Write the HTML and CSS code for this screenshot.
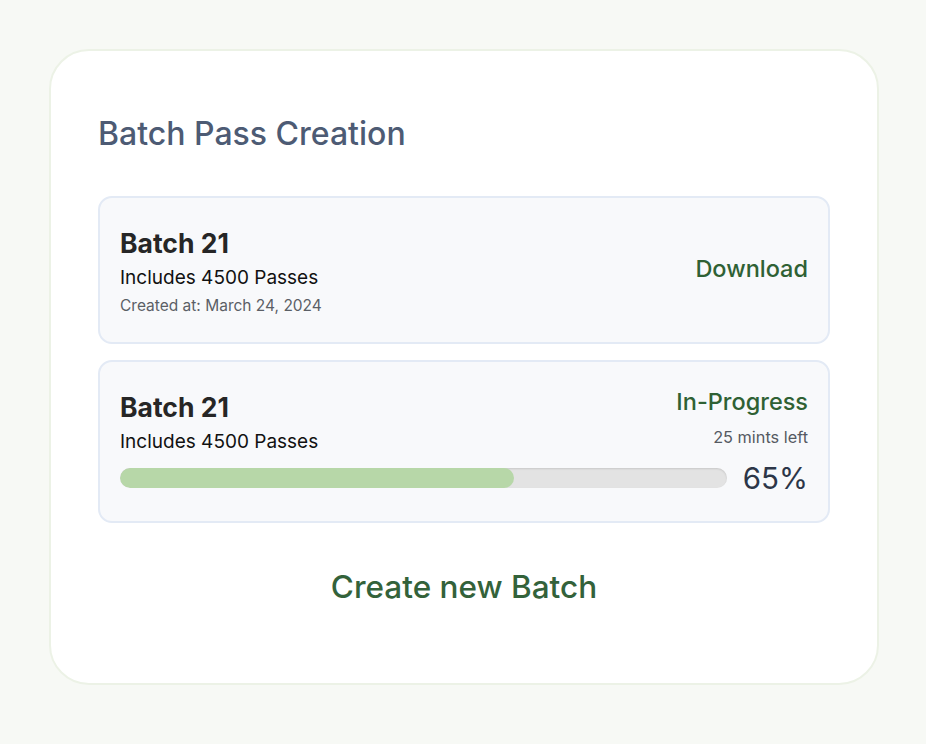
FILE: index.html
```html
<!DOCTYPE html>
<html lang="en">
<head>
<meta charset="utf-8">
<title>Batch Pass Creation</title>
<link rel="stylesheet" href="styles.css">
</head>
<body>
<div class="card">
  <h1 class="title">Batch Pass Creation</h1>
  <div class="batch">
    <div class="batch-info">
      <div class="batch-name">Batch 21</div>
      <div class="batch-count">Includes 4500 Passes</div>
      <div class="batch-date">Created at: March 24, 2024</div>
    </div>
    <a class="action">Download</a>
  </div>
  <div class="batch batch-progress">
    <div class="row-top">
      <div class="batch-info">
        <div class="batch-name">Batch 21</div>
        <div class="batch-count">Includes 4500 Passes</div>
      </div>
      <div class="status">
        <div class="status-label">In-Progress</div>
        <div class="status-time">25 mints left</div>
      </div>
    </div>
    <div class="row-bar">
      <div class="bar"><div class="fill" style="width:65%"></div></div>
      <div class="percent">65%</div>
    </div>
  </div>
  <div class="create">Create new Batch</div>
</div>
</body>
</html>
```
FILE: styles.css
```css
* { box-sizing: border-box; }
html, body { margin: 0; padding: 0; }
body {
  background: #f7f9f5;
  font-family: Inter, "Noto Sans", "Liberation Sans", sans-serif;
  padding: 49px 0 0 49px;
}
.card {
  width: 830px;
  height: 636px;
  background: #ffffff;
  border: 2px solid #ecf2e6;
  border-radius: 40px;
  padding: 63px 47px 0 47px;
}
.title {
  margin: 0 0 42px 0;
  font-size: 32px;
  font-weight: 500;
  line-height: 40px;
  color: #4d5b74;
}
.batch {
  display: flex;
  justify-content: space-between;
  align-items: flex-start;
  background: #f8f9fb;
  border: 2px solid #e3eaf5;
  border-radius: 14px;
  padding: 29px 20px 0 20px;
  margin-bottom: 16px;
  height: 148px;
}
.batch-name {
  font-size: 26.5px;
  font-weight: 700;
  line-height: 32px;
  color: #262626;
}
.batch-count {
  font-size: 19px;
  line-height: 24px;
  margin-top: 7px;
  color: #111;
}
.batch-date {
  font-size: 15.5px;
  line-height: 20px;
  margin-top: 6px;
  color: #5b5f66;
}
.action {
  font-size: 23.5px;
  font-weight: 500;
  line-height: 30px;
  color: #2f6134;
  margin-top: 27px;
}
.batch-progress {
  display: block;
  height: 163px;
  padding: 25px 20px 0 20px;
  margin-bottom: 0;
}
.row-top {
  display: flex;
  justify-content: space-between;
  align-items: flex-start;
}
.batch-progress .batch-name { margin-top: 4px; }
.status { text-align: right; }
.status-label {
  font-size: 23.5px;
  font-weight: 500;
  line-height: 30px;
  color: #2f6134;
}
.status-time {
  font-size: 16.3px;
  line-height: 20px;
  margin-top: 10px;
  color: #555a62;
}
.row-bar {
  display: flex;
  align-items: center;
  gap: 16px;
  margin-top: 6px;
}
.bar {
  flex: 1;
  height: 20px;
  background: #e3e3e3;
  border-radius: 10px;
  box-shadow: inset 0 1px 2px rgba(0,0,0,0.12);
  overflow: hidden;
}
.fill {
  height: 100%;
  background: #b7d7a8;
  border-radius: 10px;
}
.percent {
  font-size: 29.5px;
  line-height: 36px;
  color: #2c3648;
}
.create {
  text-align: center;
  margin-top: 44px;
  font-size: 31.5px;
  line-height: 40px;
  font-weight: 500;
  color: #33623a;
}
```
